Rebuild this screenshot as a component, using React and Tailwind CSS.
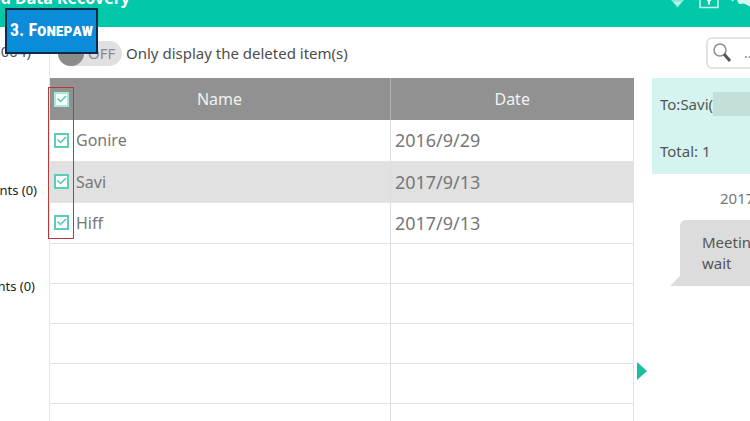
import React from 'react'

const rows = [
  { name: "Gonire", date: "2016/9/29" },
  { name: "Savi", date: "2017/9/13", active: true },
  { name: "Hiff", date: "2017/9/13" },
  {}, {}, {}, {}, {},
];

const CheckBox = ({ label, header }) => (
  <span className="relative block w-[15px] h-[15px]">
    <input
      type="checkbox"
      defaultChecked
      aria-label={label}
      className={`block appearance-none w-[15px] h-[15px] border-2 bg-white ${header ? "border-[#a5eadb]" : "border-[#5ccdb7]"}`}
    />
    <svg viewBox="0 0 15 15" className="absolute inset-0 pointer-events-none" fill="none" stroke="#4fcbb2" strokeWidth="1.5">
      <path d="M3.5 6.5 L6.5 9.5 L12 4" />
    </svg>
  </span>
);

const TopBar = () => (
  <header className="h-[27px] shrink-0 overflow-hidden bg-[#00c8a8] flex items-start justify-between">
    <div className="w-[130px] h-1.5 flex items-end justify-end whitespace-nowrap">
      <h1 className="text-[16px] leading-4 font-bold text-white">Android Data Recovery</h1>
    </div>
    <svg width="84" height="12" viewBox="0 0 84 12" fill="none" aria-hidden="true">
      <path d="M5 0 H18 L11.5 7.5 Z" fill="#8ee8d8" />
      <path d="M8 2 H15 L11.5 6 Z" fill="#c3f5ec" />
      <path d="M34 0 V7.5 H52 V0" stroke="#c9f5ed" strokeWidth="1.5" />
      <path d="M40.5 0 H45.5 L44 1.5 V4.5 H42 V1.5 Z" fill="#fff" />
      <path d="M65 0 L68 0 L67 1.5 Z" fill="#d5f8f1" />
      <path d="M71 0 H84 V6.5 L78 3.5 L73 4 Z" fill="#d5f8f1" />
    </svg>
  </header>
);

const Badge = () => (
  <div className="absolute left-[5px] top-2 w-[93px] h-[46px] border-2 border-[#0b2c49] bg-[#0a8cd8] flex items-center justify-center pb-1 whitespace-nowrap text-white font-bold text-[18px] [font-variant-caps:small-caps] font-['Roboto_Condensed','Open_Sans_Condensed','Liberation_Sans_Narrow',Roboto,sans-serif]">
    3. Fonepaw
  </div>
);

const SideBar = () => (
  <aside className="w-[50px] shrink-0 overflow-hidden border-r border-[#e6e6e6] flex flex-col items-end whitespace-nowrap text-[13px] leading-4 text-[#222]">
    <p className="mt-4 mr-[18px] text-[15px] text-[#555]">Messages (004)</p>
    <p className="mt-[123px] mr-3">Message Attachments (0)</p>
    <p className="mt-20 mr-3.5">WhatsApp Attachments (0)</p>
  </aside>
);

const ToolBar = () => (
  <div className="h-[51px] shrink-0 flex items-center justify-between overflow-hidden">
    <label className="flex items-center gap-1 pt-0.5 pl-2 text-[15px] text-[#4d4d4d] whitespace-nowrap">
      <input type="checkbox" role="switch" className="sr-only" />
      <span className="w-16 h-[25px] rounded-full bg-[#e0e0e0] flex items-center text-[#8a8a8a]">
        <span className="w-[26px] h-[25px] mr-1 rounded-full bg-[#8b8b8b]"></span>
        OFF
      </span>
      Only display the deleted item(s)
    </label>
    <div className="w-11 h-8 shrink-0 overflow-hidden">
      <div className="w-40 h-8 border-2 border-[#e3e3e3] rounded-md flex items-center pl-1 gap-3">
        <svg width="20" height="20" viewBox="0 0 20 20" fill="none" aria-hidden="true">
          <circle cx="8" cy="7" r="6" stroke="#8c8c8c" strokeWidth="1.5" />
          <path d="M12 11 L18 18" stroke="#555" strokeWidth="3" />
        </svg>
        <input type="text" aria-label="Search" placeholder="..." className="w-24 outline-none text-sm" />
      </div>
    </div>
  </div>
);

const RecordTable = () => (
  <table className="w-full table-fixed border-collapse text-[16px] leading-5 text-[#777]">
    <thead>
      <tr className="h-[42px] bg-[#919191] text-[#f2f2f2]">
        <th className="w-7/12 font-normal border-r border-[#b5b5b5] p-0">
          <div className="flex items-center pl-1 pr-5">
            <CheckBox label="Select all" header />
            <span className="flex-1 text-center">Name</span>
          </div>
        </th>
        <th className="font-normal p-0">Date</th>
      </tr>
    </thead>
    <tbody>
      {rows.map((row, index) => (
        <tr
          key={index}
          className={`border-b border-[#e2e2e2] ${row.name ? "h-[41px]" : "h-10"} ${row.active ? "bg-[#e1e1e1]" : "bg-white"}`}
        >
          <td className="p-0 pl-1 border-r border-[#dedede]">
            {row.name && (
              <div className="flex items-center gap-[7px]">
                <CheckBox label={row.name} />
                {row.name}
              </div>
            )}
          </td>
          <td className="p-0 pl-1 border-r border-[#e2e2e2] text-[18px]">{row.date}</td>
        </tr>
      ))}
    </tbody>
  </table>
);

const Preview = () => (
  <section className="w-[98px] shrink-0 overflow-hidden whitespace-nowrap text-[15px] text-[#555]">
    <div className="h-24 bg-[#d5f4ef] pl-2 pt-4 flex flex-col gap-[27px] leading-5">
      <p className="flex items-center">
        To:Savi(
        <span className="flex-1 h-6 -my-1 bg-[#c3dfda]"></span>
      </p>
      <p>Total: 1</p>
    </div>
    <p className="mt-3.5 ml-[68px] leading-5 text-[#777]">2017/9/13</p>
    <div className="mt-3 flex items-end">
      <svg width="10" height="10" viewBox="0 0 10 10" className="ml-[18px] shrink-0" aria-hidden="true">
        <path d="M10 0 V10 H0 Z" fill="#dcdcdc" />
      </svg>
      <p className="w-60 shrink-0 rounded-t-md bg-[#dcdcdc] pl-[22px] py-3 leading-[21px]">
        Meeting at noon,<br />wait
      </p>
    </div>
  </section>
);

const App = () => {
  return (
    <div className="relative h-screen overflow-hidden flex flex-col bg-white font-['Noto_Sans','Open_Sans',sans-serif]">
      <TopBar />
      <div className="flex-1 min-h-0 flex">
        <SideBar />
        <div className="flex-1 min-w-0 flex flex-col">
          <ToolBar />
          <div className="flex-1 min-h-0 flex">
            <main className="relative flex-1 min-w-0">
              <RecordTable />
              <div className="absolute -left-0.5 top-[9px] w-[26px] h-[152px] border border-[#b8393d] pointer-events-none"></div>
            </main>
            <button aria-label="Collapse preview" className="w-[18px] shrink-0 pl-[3px] pt-[242px]">
              <svg width="10" height="18" viewBox="0 0 10 18">
                <path d="M0 0 L10 9 L0 18 Z" fill="#18bfa1" />
              </svg>
            </button>
            <Preview />
          </div>
        </div>
      </div>
      <Badge />
    </div>
  )
}

export default App
